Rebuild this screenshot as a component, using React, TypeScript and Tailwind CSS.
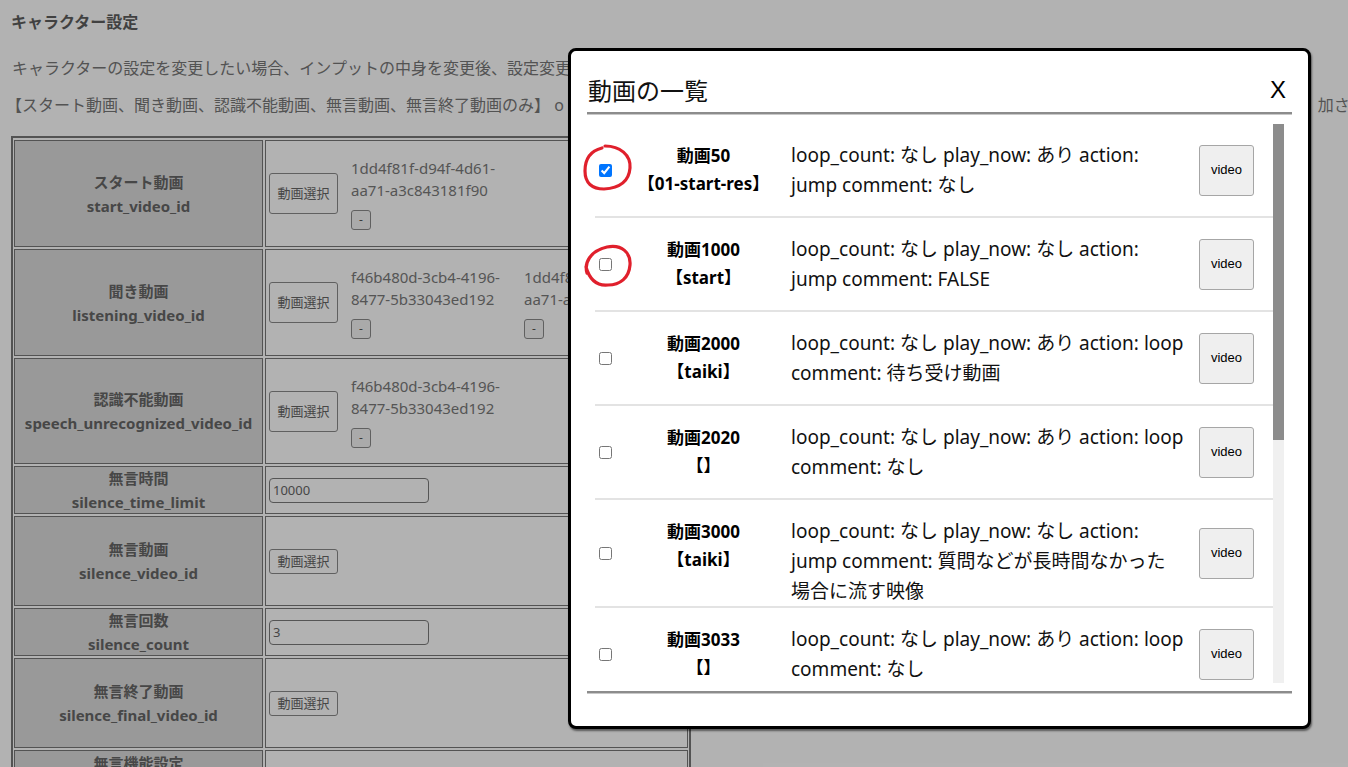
import React from "react";

const FONT = "font-['Noto_Sans','Noto_Sans_CJK_JP',sans-serif]";

type Row = { name: string; tag: string; lines: string[]; checked?: boolean };

const rows: Row[] = [
  { name: "動画50", tag: "【01-start-res】", lines: ["loop_count: なし play_now: あり action:", "jump comment: なし"], checked: true },
  { name: "動画1000", tag: "【start】", lines: ["loop_count: なし play_now: なし action:", "jump comment: FALSE"] },
  { name: "動画2000", tag: "【taiki】", lines: ["loop_count: なし play_now: あり action: loop", "comment: 待ち受け動画"] },
  { name: "動画2020", tag: "【】", lines: ["loop_count: なし play_now: あり action: loop", "comment: なし"] },
  { name: "動画3000", tag: "【taiki】", lines: ["loop_count: なし play_now: なし action:", "jump comment: 質問などが長時間なかった", "場合に流す映像"] },
  { name: "動画3033", tag: "【】", lines: ["loop_count: なし play_now: あり action: loop", "comment: なし"] },
];

function SelectBtn({ tall }: { tall?: boolean }) {
  return (
    <button
      className={`w-[69px] ${tall ? "h-[41px]" : "h-[25px]"} shrink-0 border border-[#8a8a8a] rounded-[3px] bg-white text-[13px] text-[#666] leading-none`}
    >
      動画選択
    </button>
  );
}

function Uuid({ a, b }: { a: string; b: string }) {
  return (
    <div className="ml-[13px] w-[160px] shrink-0 flex flex-col items-start">
      <div className="text-[15px] leading-[22px] text-[#7a7a7a] whitespace-nowrap">{a}</div>
      <div className="text-[15px] leading-[22px] text-[#7a7a7a] whitespace-nowrap">{b}</div>
      <button className="mt-[9px] w-[20px] h-[20px] border border-[#8a8a8a] rounded-[3px] bg-[#f4f4f4] text-[12px] text-[#555] leading-none">
        -
      </button>
    </div>
  );
}

function Head({ jp, en, h }: { jp: string; en: string; h: string }) {
  return (
    <div className={`${h} border border-[#777] bg-[#dcdcdc] flex flex-col items-center justify-center text-[15px] leading-[24px] font-bold text-[#666]`}>
      <div>{jp}</div>
      <div>{en}</div>
    </div>
  );
}

function Val({ h, children }: { h: string; children?: React.ReactNode }) {
  return <div className={`${h} border border-[#777] bg-white flex items-center pl-[3px] overflow-hidden`}>{children}</div>;
}

function Input({ v }: { v: string }) {
  return (
    <div className="w-[160px] h-[25px] border border-[#7a7a7a] rounded-[4px] bg-white text-[13px] leading-[23px] text-[#666] pl-[3px]">
      {v}
    </div>
  );
}

export default function App() {
  return (
    <div className={`relative w-full h-[767px] overflow-hidden bg-white ${FONT}`}>
      {/* background page */}
      <div className="pt-[10px]">
        <h1 className="px-[11px] text-[16px] leading-[24px] font-bold text-[#5e5e5e]">キャラクター設定</h1>
        <p className="mt-[22px] px-[12px] text-[16px] leading-[24px] text-[#777] whitespace-nowrap">
          キャラクターの設定を変更したい場合、インプットの中身を変更後、設定変更
        </p>
        <p className="mt-[13px] px-[6px] text-[16px] leading-[24px] text-[#777] whitespace-nowrap">
          【スタート動画、聞き動画、認識不能動画、無言動画、無言終了動画のみ】 o<span className="ml-[754px]">加され</span>
        </p>
        <div className="mt-[19px] ml-[11px] w-[680px] border-2 border-[#777] px-[1px] pt-[2px] grid grid-cols-[249px_423px] gap-[2px]">
          <Head jp="スタート動画" en="start_video_id" h="h-[107px]" />
          <Val h="h-[107px]">
            <SelectBtn tall />
            <Uuid a="1dd4f81f-d94f-4d61-" b="aa71-a3c843181f90" />
          </Val>
          <Head jp="聞き動画" en="listening_video_id" h="h-[107px]" />
          <Val h="h-[107px]">
            <SelectBtn tall />
            <Uuid a="f46b480d-3cb4-4196-" b="8477-5b33043ed192" />
            <Uuid a="1dd4f81f-d94f-4d61-" b="aa71-a3c843181f90" />
          </Val>
          <Head jp="認識不能動画" en="speech_unrecognized_video_id" h="h-[106px]" />
          <Val h="h-[106px]">
            <SelectBtn tall />
            <Uuid a="f46b480d-3cb4-4196-" b="8477-5b33043ed192" />
          </Val>
          <Head jp="無言時間" en="silence_time_limit" h="h-[48px]" />
          <Val h="h-[48px]">
            <Input v="10000" />
          </Val>
          <Head jp="無言動画" en="silence_video_id" h="h-[90px]" />
          <Val h="h-[90px]">
            <SelectBtn />
          </Val>
          <Head jp="無言回数" en="silence_count" h="h-[48px]" />
          <Val h="h-[48px]">
            <Input v="3" />
          </Val>
          <Head jp="無言終了動画" en="silence_final_video_id" h="h-[90px]" />
          <Val h="h-[90px]">
            <SelectBtn />
          </Val>
          <div className="h-[60px] border border-[#777] bg-[#dcdcdc] flex flex-col items-center text-[15px] leading-[24px] font-bold text-[#666]">
            <div>無言機能設定</div>
          </div>
          <Val h="h-[60px]" />
        </div>
      </div>

      {/* overlay */}
      <div className="absolute inset-0 bg-black/30" />

      {/* modal */}
      <div className="absolute left-[568px] top-[48px] w-[743px] h-[681px] border-[3px] border-black rounded-[8px] bg-white flex flex-col shadow-[1px_2px_2px_rgba(0,0,0,0.5)]">
        <div className="flex items-center justify-between pl-[17px] pr-[22px] pt-[17px] h-[61px]">
          <div className="text-[24px] leading-[34px] text-[#111] font-['Noto_Sans_CJK_JP',sans-serif]">動画の一覧</div>
          <div className="text-[24px] leading-[34px] text-black font-['Liberation_Sans',sans-serif]">X</div>
        </div>
        <div className="mx-[16px] h-[3px] bg-[#8c8c8c] border-b border-[#c8c8c8]" />
        <div className="mx-[24px] mt-[9px] h-[559px] flex overflow-hidden">
          <div className="flex-1 overflow-hidden">
            {rows.map((r, i) => (
              <div key={i} className="min-h-[94px] border-b-2 border-[#e3e3e3] flex items-start pl-[4px]">
                <div className="self-center w-[13px] h-[13px] flex">
                  <input type="checkbox" defaultChecked={r.checked} className="m-0 w-[13px] h-[13px]" />
                </div>
                <div className="ml-[4px] w-[175px] pt-[18px] text-center text-[17px] leading-[28px] font-bold text-black">
                  <div>{r.name}</div>
                  <div>{r.tag}</div>
                </div>
                <div className="w-[400px] pt-[16px] text-[19px] leading-[30px] text-[#111]">
                  {r.lines.map((l, j) => (
                    <div key={j} className="whitespace-nowrap">{l}</div>
                  ))}
                </div>
                <button className="self-center ml-[8px] w-[55px] h-[51px] border border-[#a6a6a6] rounded-[3px] bg-[#efefef] text-[13px] text-black font-['Liberation_Sans',sans-serif]">
                  video
                </button>
              </div>
            ))}
          </div>
          <div className="w-[11px] bg-[#f0f0f0] flex flex-col">
            <div className="h-[316px] bg-[#8c8c8c]" />
          </div>
        </div>
        <div className="mx-[16px] mt-[8px] h-[3px] bg-[#8c8c8c] border-b border-[#c8c8c8]" />
      </div>

      {/* red annotation circles */}
      <svg className="absolute left-[582px] top-[143px]" width="52" height="50" viewBox="0 0 52 50" fill="none">
        <path d="M23 3 C 38 3, 49 12, 48 25 C 47 38, 38 45, 22 46 C 10 46, 3 40, 3 28 C 3 17, 8 8, 20 5" stroke="#e0202c" strokeWidth="3.2" strokeLinecap="round" />
      </svg>
      <svg className="absolute left-[582px] top-[243px]" width="52" height="48" viewBox="0 0 52 48" fill="none">
        <path d="M5 30 C 2 20, 8 8, 25 4 C 40 1, 49 10, 48 22 C 47 35, 38 42, 26 42 C 16 43, 8 38, 4 24" stroke="#e0202c" strokeWidth="3.2" strokeLinecap="round" />
      </svg>
    </div>
  );
}
